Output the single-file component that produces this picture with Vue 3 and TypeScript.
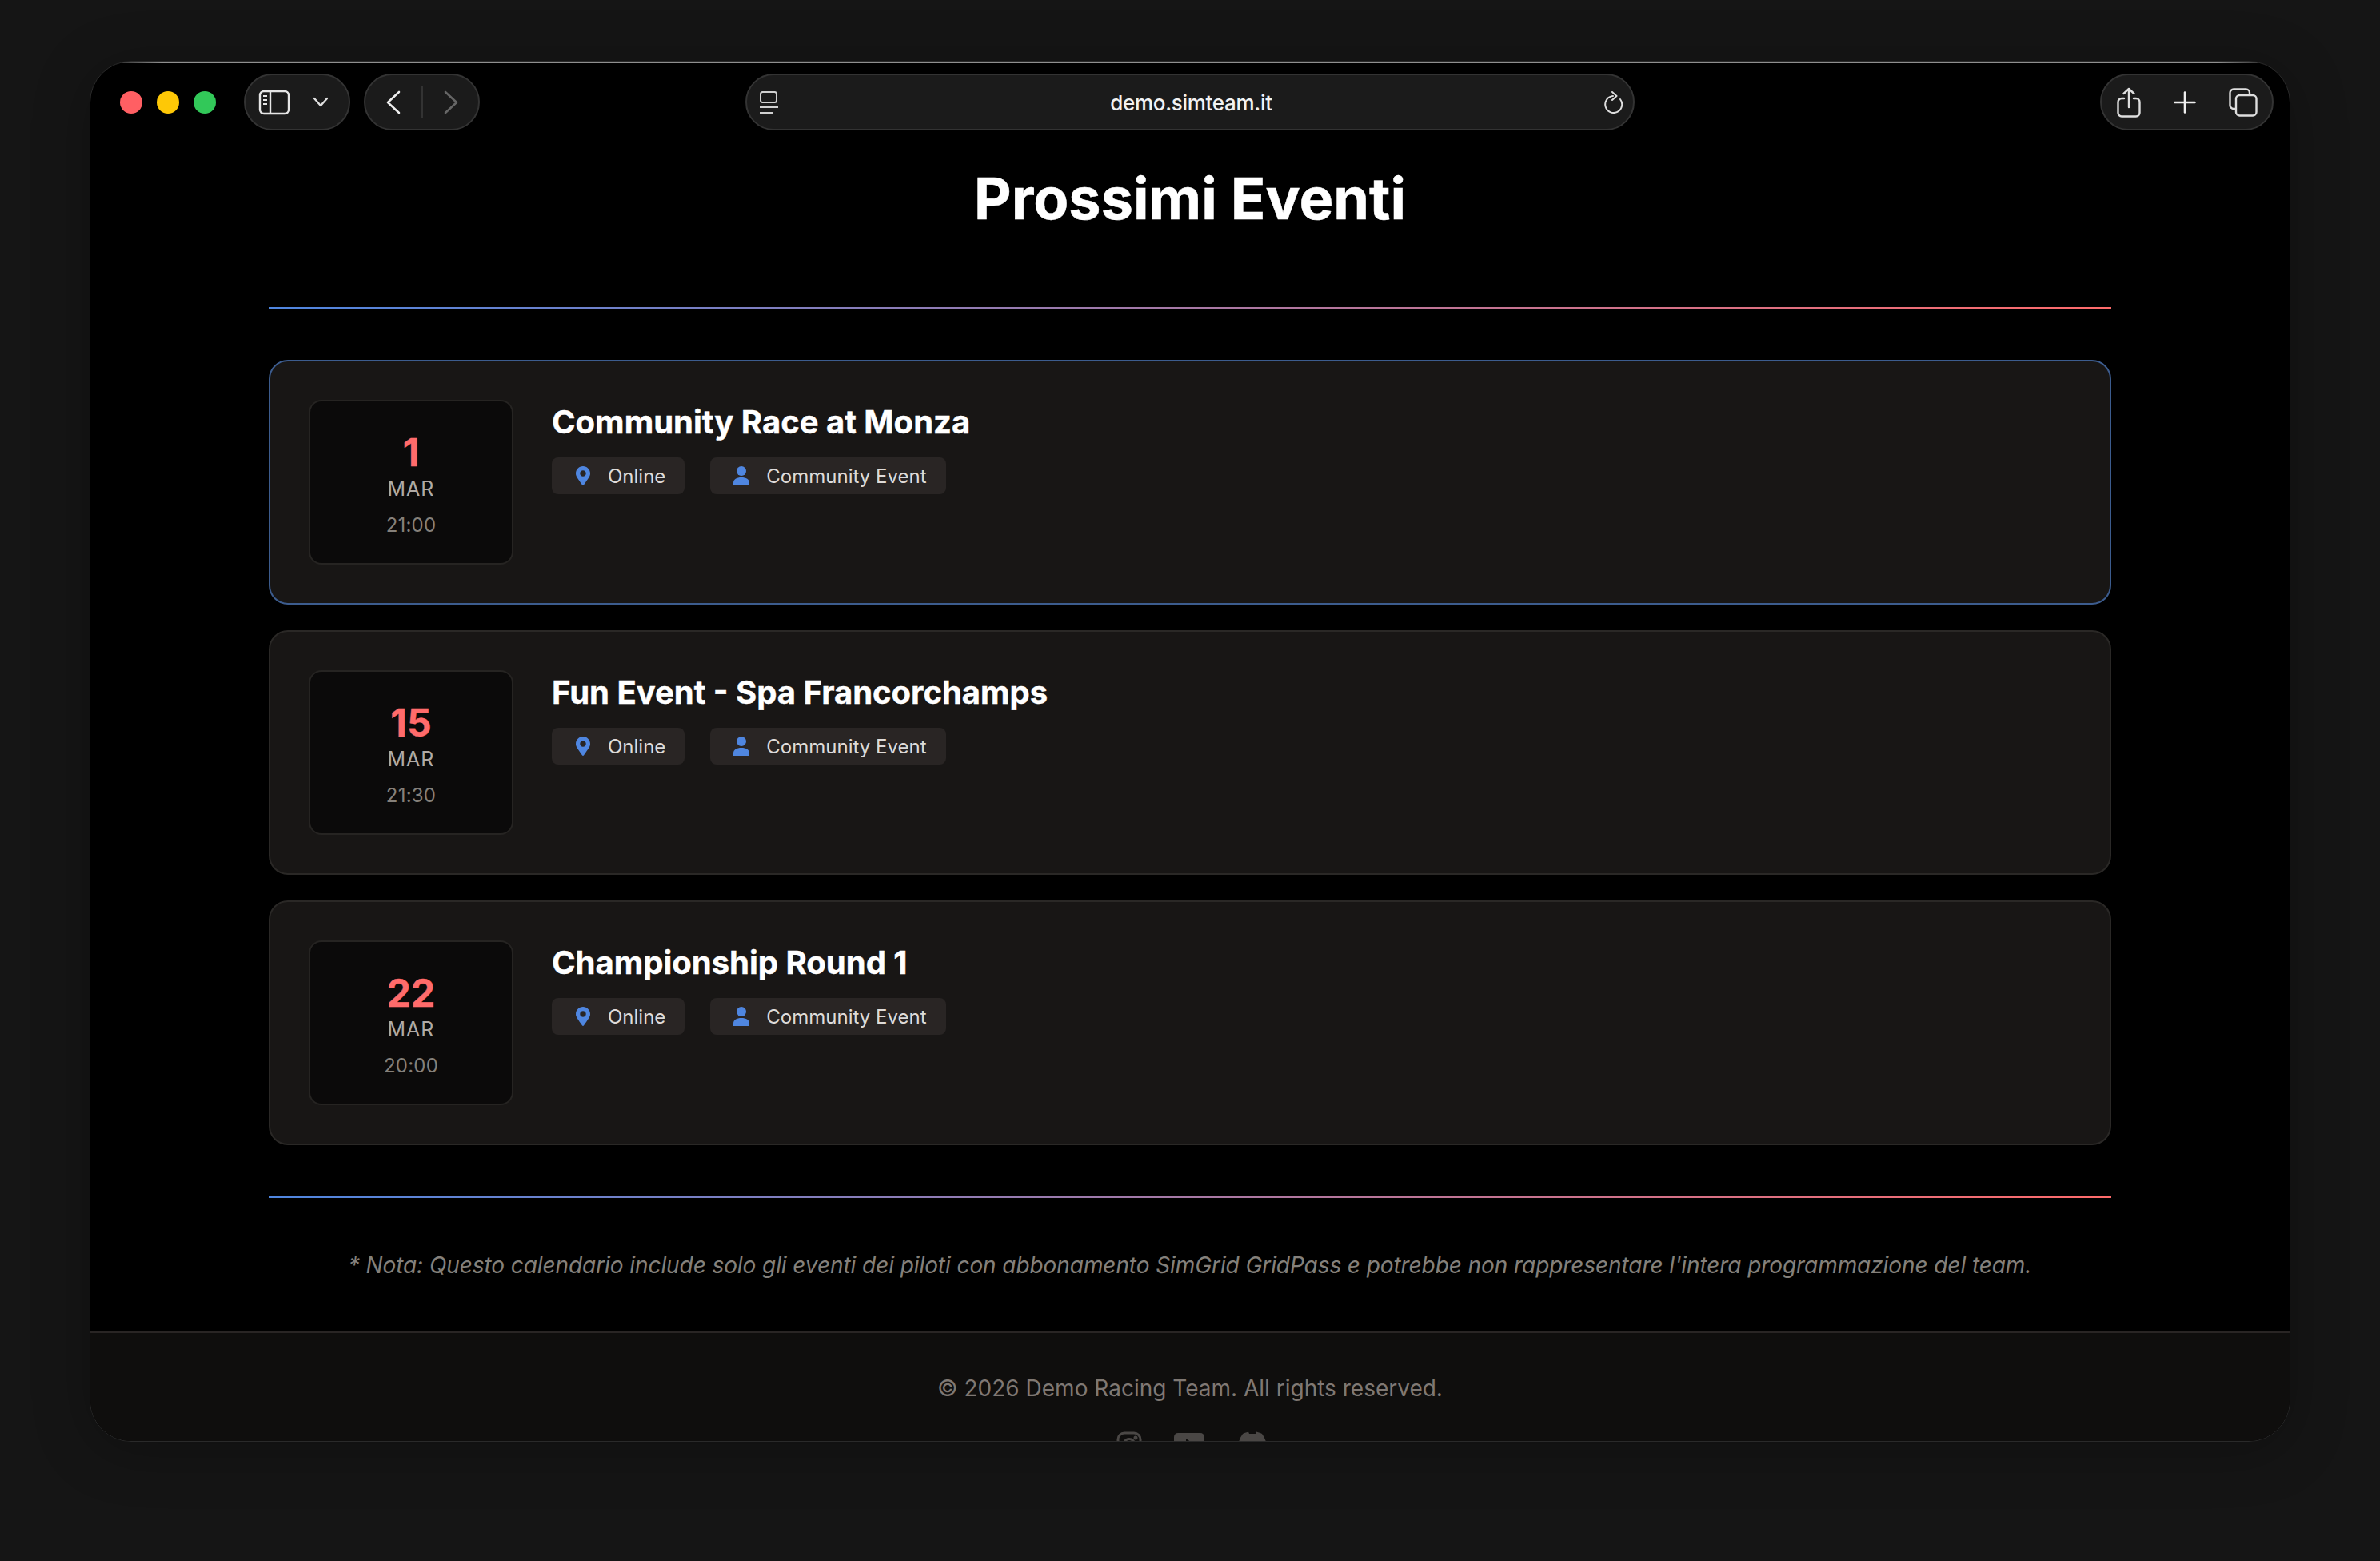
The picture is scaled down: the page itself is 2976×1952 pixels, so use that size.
<template>
  <div class="page">
    <div class="window">
      <header class="toolbar">
        <div class="toolbar-left">
          <div class="lights">
            <span class="light red"></span>
            <span class="light yellow"></span>
            <span class="light green"></span>
          </div>
          <div class="pill sidebar-pill">
            <svg width="40" height="32" viewBox="0 0 40 32" fill="none" stroke="#e6e6e6" stroke-width="2.4">
              <rect x="2" y="2" width="36" height="28" rx="5" />
              <path d="M15 2V30" />
              <path d="M6 8H11M6 13H11M6 18H11" stroke-width="2" />
            </svg>
            <svg class="chevron" width="20" height="13" viewBox="0 0 20 13" fill="none" stroke="#e0e0e0" stroke-width="2.4" stroke-linecap="round" stroke-linejoin="round">
              <path d="M2 2L10 11L18 2" />
            </svg>
          </div>
          <div class="pill nav-pill">
            <svg width="18" height="30" viewBox="0 0 18 30" fill="none" stroke="#eeeeee" stroke-width="2.6" stroke-linecap="round" stroke-linejoin="round">
              <path d="M16 2L2 15L16 28" />
            </svg>
            <span class="nav-divider"></span>
            <svg width="18" height="30" viewBox="0 0 18 30" fill="none" stroke="#666666" stroke-width="2.6" stroke-linecap="round" stroke-linejoin="round">
              <path d="M2 2L16 15L2 28" />
            </svg>
          </div>
        </div>
        <div class="pill address">
          <svg width="24" height="28" viewBox="0 0 24 28" fill="none" stroke="#d0d0d0" stroke-width="2">
            <rect x="2" y="1" width="20" height="13" rx="2.5" />
            <path d="M1 20H24M1 27H17" />
          </svg>
          <span class="url">demo.simteam.it</span>
          <svg width="24" height="28" viewBox="0 0 24 28" fill="none" stroke="#dddddd" stroke-width="2" stroke-linecap="round" stroke-linejoin="round">
            <path d="M11 6A10.500 10.500 0 1 0 20 10" />
            <path d="M10 1L15.500 6L10 11" />
          </svg>
        </div>
        <div class="toolbar-right">
          <div class="pill actions-pill">
            <svg width="30" height="38" viewBox="0 0 30 38" fill="none" stroke="#dedede" stroke-width="2.4" stroke-linecap="round" stroke-linejoin="round">
              <path d="M9 14H6A4.500 4.500 0 0 0 1.500 18.500V32A4.500 4.500 0 0 0 6 36.500H24A4.500 4.500 0 0 0 28.500 32V18.500A4.500 4.500 0 0 0 24 14H21" />
              <path d="M15 25V2M8.500 8L15 2L21.500 8" />
            </svg>
            <svg width="28" height="28" viewBox="0 0 28 28" fill="none" stroke="#eeeeee" stroke-width="2.6" stroke-linecap="round">
              <path d="M14 1.500V26.500M1.500 14H26.500" />
            </svg>
            <svg width="36" height="36" viewBox="0 0 36 36" fill="none" stroke="#dedede" stroke-width="2.4">
              <path d="M8 26H6A4.500 4.500 0 0 1 1.500 21.500V6A4.500 4.500 0 0 1 6 1.500H21.500A4.500 4.500 0 0 1 26 6V8" />
              <rect x="9" y="9" width="25.500" height="25.500" rx="4.500" />
            </svg>
          </div>
        </div>
      </header>

      <main class="content">
        <h1 class="page-title">Prossimi Eventi</h1>
        <div class="rule"></div>

        <section class="event-list">
          <article
            v-for="(event, index) in events"
            :key="event.title"
            class="event-card"
            :class="{ 'event-card--active': index === 0 }"
          >
            <div class="date-box">
              <div class="date-day">{{ event.day }}</div>
              <div class="date-month">{{ event.month }}</div>
              <div class="date-time">{{ event.time }}</div>
            </div>
            <div class="event-body">
              <h2 class="event-title">{{ event.title }}</h2>
              <div class="event-tags">
                <span class="tag">
                  <svg class="tag-icon" width="30" height="24" viewBox="0 0 384 512" fill="#4f86e0">
                    <path d="M172.268 501.67C26.97 291.031 0 260.558 0 192 0 85.961 85.961 0 192 0s192 85.961 192 192c0 68.558-26.97 99.031-172.268 309.67-9.535 13.774-29.93 13.773-39.464 0zM192 272c44.183 0 80-35.817 80-80s-35.817-80-80-80-80 35.817-80 80 35.817 80 80 80z" />
                  </svg>
                  Online
                </span>
                <span class="tag">
                  <svg class="tag-icon" width="30" height="24" viewBox="0 0 24 24" fill="#4f86e0">
                    <circle cx="12" cy="6" r="6" />
                    <path d="M2 24V20.500C2 16.500 6 14 12 14S22 16.500 22 20.500V24Z" />
                  </svg>
                  Community Event
                </span>
              </div>
            </div>
          </article>
        </section>

        <div class="rule rule--bottom"></div>
        <p class="note">
          * Nota: Questo calendario include solo gli eventi dei piloti con abbonamento SimGrid GridPass e potrebbe non rappresentare l'intera programmazione del team.
        </p>
      </main>

      <footer class="footer">
        <p class="copyright">© 2026 Demo Racing Team. All rights reserved.</p>
        <div class="socials">
          <svg width="32" height="32" viewBox="0 0 32 32" fill="none" stroke="#4a4745" stroke-width="3">
            <rect x="2" y="2" width="28" height="28" rx="8" />
            <circle cx="16" cy="16" r="6.500" />
            <circle cx="24" cy="8" r="1" fill="#4a4745" />
          </svg>
          <svg width="40" height="32" viewBox="0 0 40 32" fill="#4a4745">
            <path d="M6 2H34A5 5 0 0 1 39 7V25A5 5 0 0 1 34 30H6A5 5 0 0 1 1 25V7A5 5 0 0 1 6 2Z" />
            <path d="M16 9L26 16L16 23Z" fill="#0f0e0d" />
          </svg>
          <svg width="40" height="32" viewBox="0 0 40 32" fill="#4a4745">
            <path d="M8 3C11 1.500 13 1 15 0.500L16 3H24L25 0.500C27 1 29 1.500 32 3C37 10 39 18 39 27C36 29.500 33 31 29 32L27 28H13L11 32C7 31 4 29.500 1 27C1 18 3 10 8 3Z" />
          </svg>
        </div>
      </footer>
    </div>
  </div>
</template>

<script setup lang="ts">
interface RaceEvent {
  day: string
  month: string
  time: string
  title: string
}

const events: RaceEvent[] = [
  { day: '1', month: 'MAR', time: '21:00', title: 'Community Race at Monza' },
  { day: '15', month: 'MAR', time: '21:30', title: 'Fun Event - Spa Francorchamps' },
  { day: '22', month: 'MAR', time: '20:00', title: 'Championship Round 1' }
]
</script>

<style>
html,
body {
  margin: 0;
  background: #151515;
}
</style>

<style scoped>
.page {
  width: 2976px;
  height: 1952px;
  box-sizing: border-box;
  padding: 76px 112px 149px;
  font-family: Inter, 'Liberation Sans', sans-serif;
  background: #151515;
}
.window {
  position: relative;
  height: 100%;
  display: flex;
  flex-direction: column;
  overflow: hidden;
  background: #000000;
  border: 1px solid #2a2a2a;
  border-radius: 52px;
  box-sizing: border-box;
  box-shadow: 0 10px 70px rgba(0, 0, 0, 0.25);
}
.window::before {
  content: '';
  position: absolute;
  top: 0;
  left: 30px;
  right: 30px;
  height: 2px;
  background: linear-gradient(90deg, #2a2a2a, #8f8f8f 60px, #8f8f8f calc(100% - 60px), #2a2a2a);
}
.toolbar {
  flex: none;
  display: grid;
  grid-template-columns: 1fr 1112px 1fr;
  align-items: center;
  height: 103px;
  padding: 15px 20px 17px;
  box-sizing: border-box;
}
.toolbar-left {
  display: flex;
  align-items: center;
}
.toolbar-right {
  display: flex;
  justify-content: flex-end;
}
.lights {
  display: flex;
  gap: 18px;
  margin: 0 35px 0 17px;
}
.light {
  width: 28px;
  height: 28px;
  border-radius: 50%;
}
.red {
  background: #ff5f63;
}
.yellow {
  background: #fec806;
}
.green {
  background: #32c859;
}
.pill {
  display: flex;
  align-items: center;
  height: 71px;
  box-sizing: border-box;
  background: #1b1b1b;
  border: 2px solid #333333;
  border-radius: 36px;
}
.sidebar-pill {
  width: 133px;
  padding-left: 16px;
  margin-right: 17px;
}
.chevron {
  margin-left: 28px;
}
.nav-pill {
  width: 145px;
  padding-left: 26px;
}
.nav-divider {
  width: 2px;
  height: 40px;
  margin: 0 26px;
  background: #333333;
}
.address {
  justify-content: space-between;
  padding: 0 12px 0 15px;
}
.url {
  padding-top: 2px;
  color: #f2f2f2;
  font-size: 26px;
  font-weight: 500;
  letter-spacing: -0.3px;
}
.actions-pill {
  width: 217px;
  justify-content: space-between;
  padding: 0 18px 0 19px;
}
.content {
  flex: 1;
  width: 2304px;
  margin: 0 auto;
}
.page-title {
  margin: 24px 0 92px;
  color: #ffffff;
  font-size: 72px;
  font-weight: 700;
  line-height: 88px;
  text-align: center;
  -webkit-text-stroke: 0.5px #ffffff;
}
.rule {
  height: 2px;
  background: linear-gradient(90deg, #4f86e0, #ff6b6b);
}
.event-list {
  display: flex;
  flex-direction: column;
  gap: 32px;
  margin: 64px 0;
}
.event-card {
  display: flex;
  gap: 48px;
  height: 306px;
  padding: 48px;
  box-sizing: border-box;
  background: #181615;
  border: 2px solid #2a2826;
  border-radius: 24px;
}
.event-card--active {
  border-color: #3c5c8e;
}
.date-box {
  flex: none;
  display: flex;
  flex-direction: column;
  align-items: center;
  justify-content: center;
  width: 256px;
  height: 206px;
  padding-top: 6px;
  box-sizing: border-box;
  background: #0b0a0a;
  border: 2px solid #262422;
  border-radius: 16px;
}
.date-day {
  margin-bottom: -2px;
  color: #ff6b6b;
  font-size: 48px;
  font-weight: 700;
  line-height: 58px;
  -webkit-text-stroke: 0.4px #ff6b6b;
}
.date-month {
  color: #b0aaa5;
  font-size: 25px;
  line-height: 36px;
  letter-spacing: 1px;
}
.date-time {
  margin-top: 10px;
  color: #85807a;
  font-size: 24px;
  line-height: 36px;
  letter-spacing: 0.2px;
}
.event-title {
  margin: 0;
  color: #ffffff;
  font-size: 40px;
  font-weight: 700;
  line-height: 56px;
  -webkit-text-stroke: 0.4px #ffffff;
}
.event-tags {
  display: flex;
  gap: 32px;
  margin-top: 16px;
}
.tag {
  display: flex;
  align-items: center;
  gap: 16px;
  height: 46px;
  padding: 0 24px;
  color: #dedbd9;
  font-size: 24px;
  background: #292524;
  border-radius: 8px;
}
.note {
  margin: 64px 0 0;
  color: #84807b;
  font-size: 28px;
  font-style: italic;
  line-height: 40px;
  letter-spacing: -0.085px;
  text-align: center;
}
.footer {
  flex: none;
  height: 137px;
  padding-top: 49px;
  box-sizing: border-box;
  background: #0f0e0d;
  border-top: 2px solid #292524;
}
.copyright {
  margin: 0;
  color: #7f7873;
  font-size: 28px;
  line-height: 40px;
  text-align: center;
}
.socials {
  display: flex;
  justify-content: center;
  gap: 39px;
  margin-top: 34px;
  padding-left: 6px;
}
</style>
